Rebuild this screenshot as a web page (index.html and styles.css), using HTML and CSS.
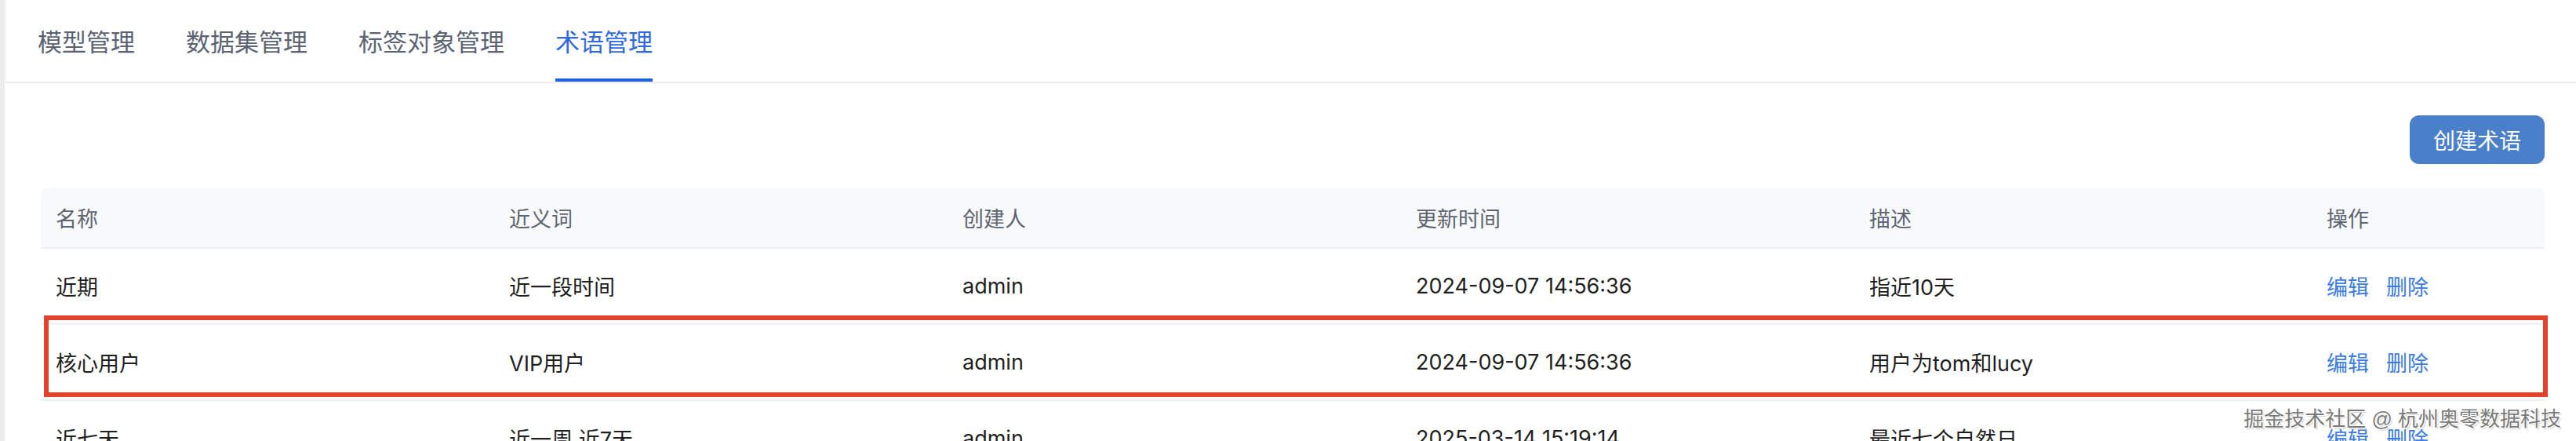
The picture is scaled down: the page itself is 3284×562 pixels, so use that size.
FILE: index.html
```html
<!DOCTYPE html>
<html lang="zh">
<head>
<meta charset="utf-8">
<title>术语管理</title>
<link rel="stylesheet" href="styles.css">
</head>
<body>
<div class="app">
  <div class="side-strip"></div>
  <div class="main">
    <nav class="tabs">
      <div class="tab">模型管理</div>
      <div class="tab">数据集管理</div>
      <div class="tab">标签对象管理</div>
      <div class="tab active">术语管理</div>
    </nav>
    <section class="content">
      <div class="toolbar">
        <button class="btn-primary">创建术语</button>
      </div>
      <div class="table">
        <div class="row head">
          <div class="cell">名称</div>
          <div class="cell">近义词</div>
          <div class="cell">创建人</div>
          <div class="cell">更新时间</div>
          <div class="cell">描述</div>
          <div class="cell last">操作</div>
        </div>
        <div class="row">
          <div class="cell">近期</div>
          <div class="cell">近一段时间</div>
          <div class="cell">admin</div>
          <div class="cell">2024-09-07 14:56:36</div>
          <div class="cell">指近10天</div>
          <div class="cell last actions"><a>编辑</a><a>删除</a></div>
        </div>
        <div class="row">
          <div class="cell">核心用户</div>
          <div class="cell">VIP用户</div>
          <div class="cell">admin</div>
          <div class="cell">2024-09-07 14:56:36</div>
          <div class="cell">用户为tom和lucy</div>
          <div class="cell last actions"><a>编辑</a><a>删除</a></div>
        </div>
        <div class="row">
          <div class="cell">近七天</div>
          <div class="cell">近一周,近7天</div>
          <div class="cell">admin</div>
          <div class="cell">2025-03-14 15:19:14</div>
          <div class="cell">最近七个自然日</div>
          <div class="cell last actions"><a>编辑</a><a>删除</a></div>
        </div>
        <div class="highlight-box"></div>
      </div>
    </section>
  </div>
</div>
<div class="watermark">掘金技术社区 @ 杭州奥零数据科技</div>
</body>
</html>
```

FILE: styles.css
```css
* { box-sizing: border-box; }
html, body {
  margin: 0;
  padding: 0;
  background: #ffffff;
  height: 562px;
  overflow: hidden;
}
body {
  font-family: "Liberation Sans", "Noto Sans CJK SC", sans-serif;
  color: #1f1f1f;
  position: relative;
}
.app {
  display: flex;
  min-height: 562px;
}
.side-strip {
  width: 6px;
  background: #ececec;
  flex: none;
}
.main {
  flex: 1;
  min-width: 0;
}
.tabs {
  display: flex;
  gap: 65px;
  height: 106px;
  padding-left: 40px;
  border-bottom: 2px solid #ebebeb;
  border-left: 1px solid #f0f0f0;
  margin-left: 1px;
}
.tab {
  display: flex;
  align-items: center;
  height: 104px;
  padding-top: 2px;
  font-size: 31px;
  color: #5b6373;
  border-bottom: 4px solid transparent;
}
.tab.active {
  color: #2f6ae0;
  border-bottom-color: #1f5fe0;
}
.content {
  padding: 41px 40px 0 46px;
}
.toolbar {
  display: flex;
  justify-content: flex-end;
}
.btn-primary {
  height: 62px;
  width: 172px;
  border: none;
  border-radius: 12px;
  background: #4a80c9;
  color: #ffffff;
  font-family: "Liberation Sans", "Noto Sans CJK SC", sans-serif;
  font-size: 28px;
  padding: 0;
}
.table {
  position: relative;
  margin-top: 30px;
}
.row {
  display: flex;
  height: 97px;
  align-items: center;
  border-bottom: 3px solid #f1f2f4;
  font-size: 27px;
  font-family: "Inter", "Noto Sans CJK SC", sans-serif;
}
.row.head {
  height: 78px;
  background: #f8f9fb;
  border-radius: 12px 12px 0 0;
  border-bottom: 2px solid #eceef1;
  color: #5e6472;
}
.cell {
  width: 578px;
  flex: none;
  padding-left: 19px;
  white-space: nowrap;
}
.cell.last {
  width: auto;
  flex: 1;
  padding-left: 24px;
}
.actions {
  display: flex;
  gap: 22px;
}
.actions a {
  color: #3a7be4;
  cursor: pointer;
}
.highlight-box {
  position: absolute;
  left: 4px;
  right: -4px;
  top: 163px;
  height: 104px;
  border: 6px solid #e0442b;
  pointer-events: none;
}
.watermark {
  position: absolute;
  right: 19px;
  top: 513px;
  font-size: 26px;
  color: #7a7a7a;
  white-space: nowrap;
  text-shadow: 1px 1px 0 #ffffff, -1px -1px 0 #ffffff, 1px -1px 0 #ffffff, -1px 1px 0 #ffffff, 2px 2px 1px #cfcfcf;
}
```
